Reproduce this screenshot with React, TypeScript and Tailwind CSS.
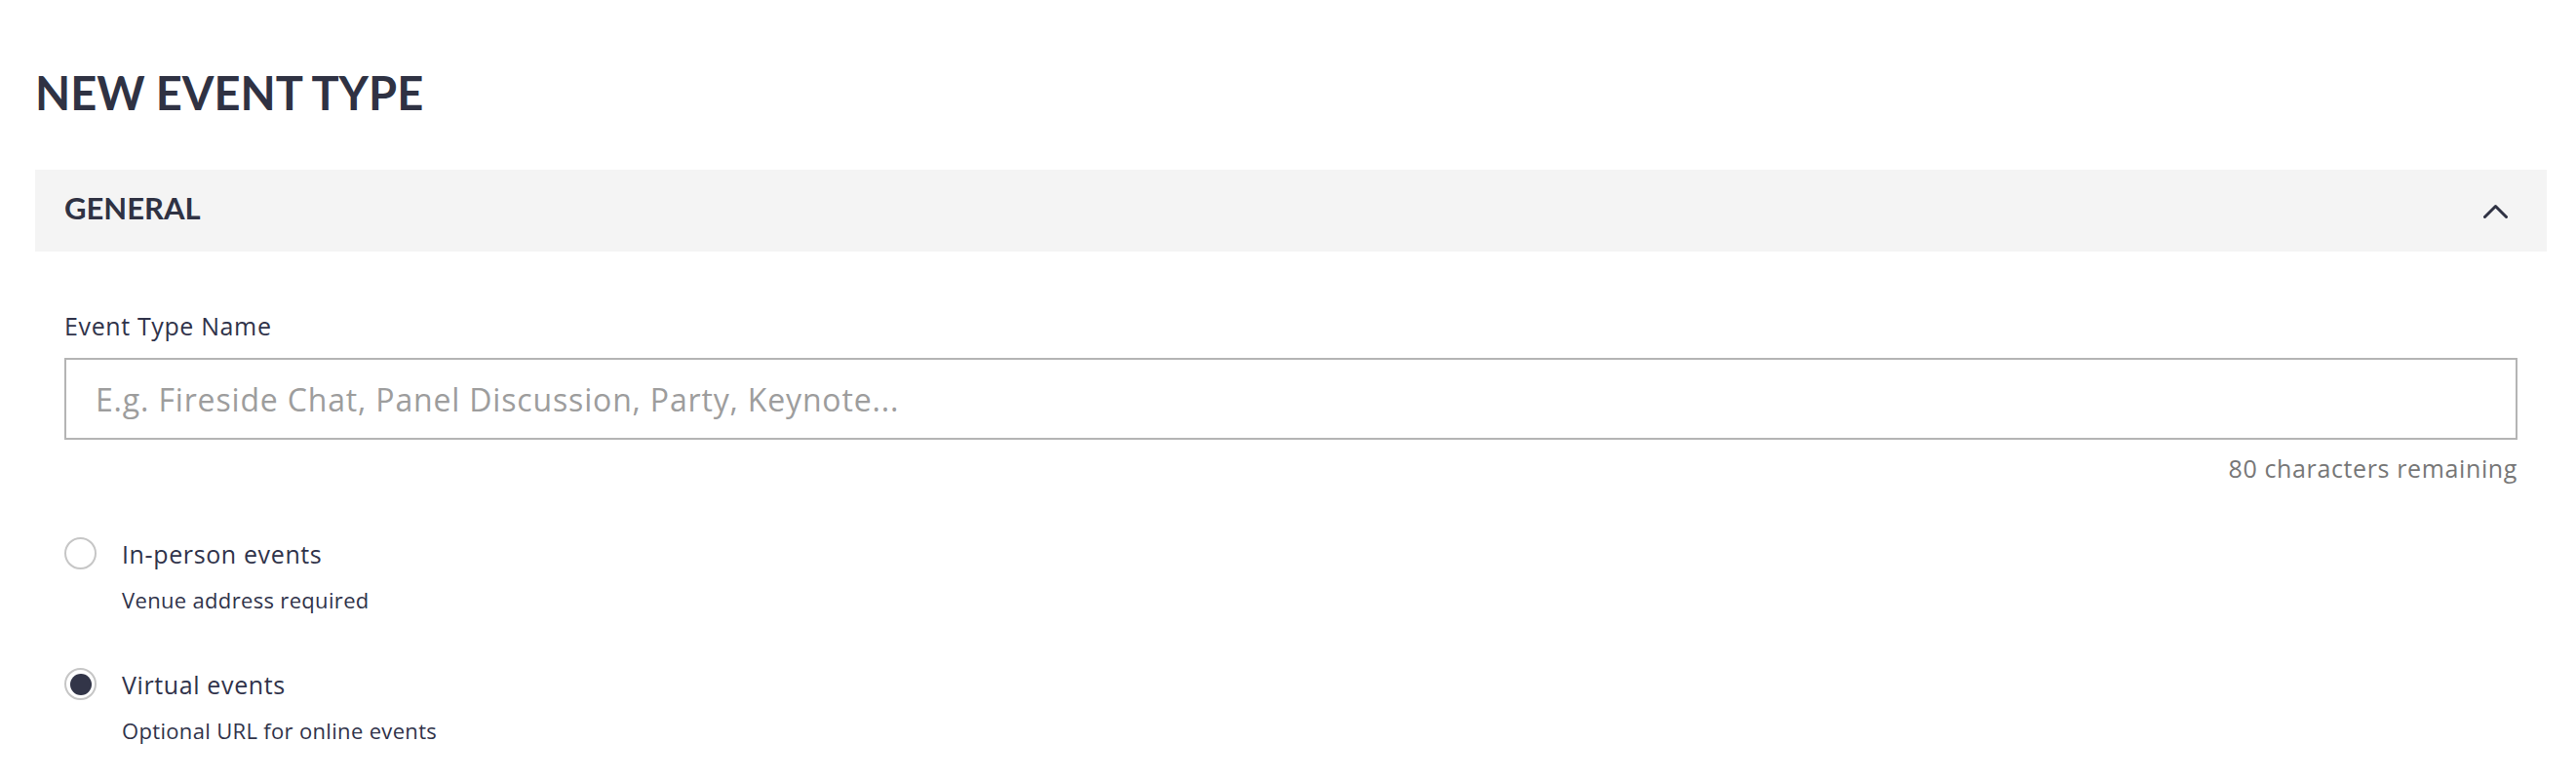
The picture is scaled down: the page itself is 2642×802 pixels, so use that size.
import React from "react";

function Radio({ checked }: { checked?: boolean }) {
  return (
    <div className="w-[33px] h-[33px] shrink-0 rounded-full border-2 border-[#c6c6c6] bg-white flex items-center justify-center">
      {checked && <div className="w-[22px] h-[22px] rounded-full bg-[#323548]" />}
    </div>
  );
}

function Option({ title, sub, checked }: { title: string; sub: string; checked?: boolean }) {
  return (
    <div className="flex items-start">
      <Radio checked={checked} />
      <div className="ml-[26px] pt-[2px] flex flex-col">
        <div className="text-[25px] leading-[30px] tracking-[0.025em] text-[#30334a]">{title}</div>
        <div className="mt-[19px] text-[22px] leading-[26px] tracking-[0.015em] text-[#30334a]">{sub}</div>
      </div>
    </div>
  );
}

export default function App() {
  return (
    <div className="w-full min-h-[802px] bg-white font-['Open_Sans',sans-serif] pl-[36px] pr-[30px]">
      <h1 className="mt-0 pt-[67px] text-[47px] leading-[56px] font-bold text-[#2f3243] font-[Lato,sans-serif]">
        NEW EVENT TYPE
      </h1>
      <div className="mt-[51px] h-[84px] bg-[#f4f4f4] flex items-center justify-between pl-[30px] pr-[40px]">
        <span className="mb-[6px] text-[31px] font-bold text-[#2f3243] leading-none font-[Lato,sans-serif]">GENERAL</span>
        <svg width="25" height="15" viewBox="0 0 25 15" fill="none">
          <polyline points="1.5,13.5 12.5,2.5 23.5,13.5" stroke="#2f3243" strokeWidth="3" strokeLinecap="round" strokeLinejoin="round" />
        </svg>
      </div>
      <div className="px-[30px]">
        <div className="mt-[61px] text-[25px] leading-[30px] tracking-[0.025em] text-[#30334a]">Event Type Name</div>
        <input
          type="text"
          placeholder="E.g. Fireside Chat, Panel Discussion, Party, Keynote..."
          className="mt-[18px] block w-full h-[84px] border-2 border-[#b4b4b4] bg-white pl-[30px] text-[32px] tracking-[0.026em] text-[#30334a] placeholder:text-[#9d9d9d] outline-none font-['Open_Sans',sans-serif]"
        />
        <div className="mt-[14px] text-right text-[25px] leading-[30px] tracking-[0.025em] text-[#777777]">80 characters remaining</div>
        <div className="mt-[56px] flex flex-col gap-[57px]">
          <Option title="In-person events" sub="Venue address required" />
          <Option title="Virtual events" sub="Optional URL for online events" checked />
        </div>
      </div>
    </div>
  );
}
